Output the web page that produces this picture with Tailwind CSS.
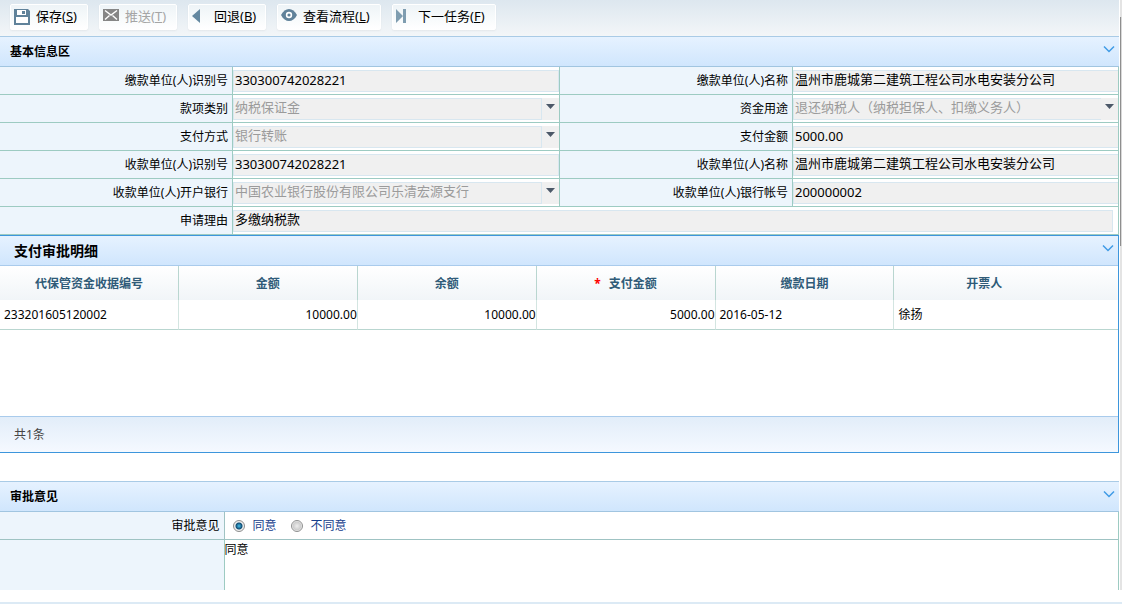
<!DOCTYPE html>
<html lang="zh-CN">
<head>
<meta charset="utf-8">
<meta name="viewport" content="width=device-width, initial-scale=1">
<title>支付审批</title>
<script src="https://cdn.jsdelivr.net/npm/@tailwindcss/browser@4"></script>
</head>
<body class="min-h-screen bg-white font-['Noto_Sans','Noto_Sans_CJK_SC',sans-serif] text-xs text-black">
<div class="flex">
<div class="min-w-0 flex-1">

<header class="flex h-9 items-start gap-[11px] bg-linear-to-b from-[#dde7ef] to-[#f3f6f8] px-2.5 pt-1">
  <button class="flex h-[26px] w-[78px] items-center gap-1.5 rounded-xs border border-white bg-linear-to-b from-[#eef4f7] to-white pl-[3px] text-[13px] whitespace-nowrap shadow-xs">
    <svg class="size-4 shrink-0" viewBox="0 0 16 16"><path fill="#60829a" d="M0 0h14l2 2v14H0z"/><path fill="#fff" d="M2 8h12v6H2zM3 1h9v5H3z"/><path fill="#60829a" d="M8 2h3v3H8z"/></svg>
    <span>保存(<u>S</u>)</span>
  </button>
  <button disabled class="flex h-[26px] w-[78px] items-center gap-1.5 rounded-xs border border-white bg-linear-to-b from-[#eef4f7] to-white pl-[3px] text-[13px] whitespace-nowrap text-[#a5a5a5] shadow-xs">
    <svg class="mb-1 h-3 w-4 shrink-0" viewBox="0 0 16 12"><path fill="#868686" d="M0 0h16v12H0z"/><path fill="none" stroke="#fff" stroke-width="1.4" d="M2 1.5l6 4.500 6-4.500M2 10.500l4.500-4M14 10.500l-4.500-4"/></svg>
    <span>推送(<u>T</u>)</span>
  </button>
  <button class="flex h-[26px] w-[78px] items-center gap-3.5 rounded-xs border border-white bg-linear-to-b from-[#eef4f7] to-white pl-[3px] text-[13px] whitespace-nowrap shadow-xs">
    <svg class="mb-0.5 h-3.5 w-2 shrink-0" viewBox="0 0 8 14"><path fill="#6488a0" d="M8 0v14L0 7z"/></svg>
    <span>回退(<u>B</u>)</span>
  </button>
  <button class="flex h-[26px] w-[104px] items-center gap-1.5 rounded-xs border border-white bg-linear-to-b from-[#eef4f7] to-white pl-[3px] text-[13px] whitespace-nowrap shadow-xs">
    <svg class="mb-1 h-3 w-4 shrink-0" viewBox="0 0 16 12"><path fill="#60829a" d="M0 6C4-2 12-2 16 6 12 14 4 14 0 6z"/><circle cx="8" cy="6" r="3.200" fill="#fff"/><circle cx="8" cy="6" r="1.600" fill="#60829a"/></svg>
    <span>查看流程(<u>L</u>)</span>
  </button>
  <button class="flex h-[26px] w-[104px] items-center gap-3 rounded-xs border border-white bg-linear-to-b from-[#eef4f7] to-white pl-[3px] text-[13px] whitespace-nowrap shadow-xs">
    <svg class="mb-0.5 h-3.5 w-2.5 shrink-0" viewBox="0 0 10 14"><path fill="#7f9db0" d="M0 0l7 7-7 7zM7 0h3v14H7z"/></svg>
    <span>下一任务(<u>F</u>)</span>
  </button>
</header>

<section>
  <div class="flex h-[31px] items-center justify-between border-y border-t-[#a9cbe6] border-b-[#a1c5e0] bg-linear-to-b from-[#e6f2ff] to-[#d0e6fd] pr-1 pl-2.5">
    <h2 class="text-xs font-bold">基本信息区</h2>
    <button aria-label="收起" class="mb-1.5"><svg class="h-2 w-3" viewBox="0 0 12 8"><path fill="none" stroke="#3f9be6" stroke-width="1.500" d="M1 1.500l5 5 5-5"/></svg></button>
  </div>
  <div class="grid grid-cols-[232fr_327fr_233fr_326fr] border-r border-[#9dcbc2]">
    <label for="f1" class="flex h-7 items-center justify-end border-b border-[#9dcbc2] bg-[#edf5fc] pr-1">缴款单位(人)识别号</label>
    <div class="flex h-7 min-w-0 items-start border-b border-l border-[#9dcbc2] pt-[3px]"><input id="f1" readonly class="h-[22px] w-full min-w-0 border border-[#d8e7f0] bg-[#f0f0f0] px-px pb-0.5 text-[13px]" value="330300742028221"></div>
    <label for="f2" class="flex h-7 items-center justify-end border-b border-l border-[#9dcbc2] bg-[#edf5fc] pr-1">缴款单位(人)名称</label>
    <div class="flex h-7 min-w-0 items-start border-b border-l border-[#9dcbc2] pt-[3px]"><input id="f2" readonly class="h-[22px] w-full min-w-0 border border-r-0 border-[#d8e7f0] bg-[#f0f0f0] px-px pb-1.5 text-[13px]" value="温州市鹿城第二建筑工程公司水电安装分公司"></div>

    <label for="f3" class="flex h-7 items-center justify-end border-b border-[#9dcbc2] bg-[#edf5fc] pr-1">款项类别</label>
    <div class="flex h-7 min-w-0 items-start border-b border-l border-[#9dcbc2] pt-[3px]"><select id="f3" disabled class="h-[22px] min-w-0 flex-1 appearance-none border border-[#d8e7f0] bg-[#f0f0f0] px-px pb-0.5 text-[13px] text-[#9b9b9b]"><option>纳税保证金</option></select><span class="flex h-[22px] w-[17px] justify-center bg-[#f0f0f0] pt-1.5"><svg class="h-[5px] w-[9px]" viewBox="0 0 9 5"><path fill="#4c5868" d="M0 0h9L4.500 5z"/></svg></span></div>
    <label for="f4" class="flex h-7 items-center justify-end border-b border-l border-[#9dcbc2] bg-[#edf5fc] pr-1">资金用途</label>
    <div class="flex h-7 min-w-0 items-start border-b border-l border-[#9dcbc2] pt-[3px]"><select id="f4" disabled class="h-[22px] min-w-0 flex-1 appearance-none border border-r-0 border-[#d8e7f0] bg-[#f0f0f0] px-px pb-0.5 text-[13px] text-[#9b9b9b]"><option>退还纳税人（纳税担保人、扣缴义务人）</option></select><span class="flex h-[22px] w-[17px] justify-center bg-[#f0f0f0] pt-1.5"><svg class="h-[5px] w-[9px]" viewBox="0 0 9 5"><path fill="#4c5868" d="M0 0h9L4.500 5z"/></svg></span></div>

    <label for="f5" class="flex h-7 items-center justify-end border-b border-[#9dcbc2] bg-[#edf5fc] pr-1">支付方式</label>
    <div class="flex h-7 min-w-0 items-start border-b border-l border-[#9dcbc2] pt-[3px]"><select id="f5" disabled class="h-[22px] min-w-0 flex-1 appearance-none border border-[#d8e7f0] bg-[#f0f0f0] px-px pb-0.5 text-[13px] text-[#9b9b9b]"><option>银行转账</option></select><span class="flex h-[22px] w-[17px] justify-center bg-[#f0f0f0] pt-1.5"><svg class="h-[5px] w-[9px]" viewBox="0 0 9 5"><path fill="#4c5868" d="M0 0h9L4.500 5z"/></svg></span></div>
    <label for="f6" class="flex h-7 items-center justify-end border-b border-l border-[#9dcbc2] bg-[#edf5fc] pr-1">支付金额</label>
    <div class="flex h-7 min-w-0 items-start border-b border-l border-[#9dcbc2] pt-[3px]"><input id="f6" readonly class="h-[22px] w-full min-w-0 border border-r-0 border-[#d8e7f0] bg-[#f0f0f0] px-px pb-0.5 text-[13px]" value="5000.00"></div>

    <label for="f7" class="flex h-7 items-center justify-end border-b border-[#9dcbc2] bg-[#edf5fc] pr-1">收款单位(人)识别号</label>
    <div class="flex h-7 min-w-0 items-start border-b border-l border-[#9dcbc2] pt-[3px]"><input id="f7" readonly class="h-[22px] w-full min-w-0 border border-[#d8e7f0] bg-[#f0f0f0] px-px pb-0.5 text-[13px]" value="330300742028221"></div>
    <label for="f8" class="flex h-7 items-center justify-end border-b border-l border-[#9dcbc2] bg-[#edf5fc] pr-1">收款单位(人)名称</label>
    <div class="flex h-7 min-w-0 items-start border-b border-l border-[#9dcbc2] pt-[3px]"><input id="f8" readonly class="h-[22px] w-full min-w-0 border border-r-0 border-[#d8e7f0] bg-[#f0f0f0] px-px pb-1.5 text-[13px]" value="温州市鹿城第二建筑工程公司水电安装分公司"></div>

    <label for="f9" class="flex h-7 items-center justify-end border-b border-[#9dcbc2] bg-[#edf5fc] pr-1">收款单位(人)开户银行</label>
    <div class="flex h-7 min-w-0 items-start border-b border-l border-[#9dcbc2] pt-[3px]"><select id="f9" disabled class="h-[22px] min-w-0 flex-1 appearance-none border border-[#d8e7f0] bg-[#f0f0f0] px-px pb-0.5 text-[13px] text-[#9b9b9b]"><option>中国农业银行股份有限公司乐清宏源支行</option></select><span class="flex h-[22px] w-[17px] justify-center bg-[#f0f0f0] pt-1.5"><svg class="h-[5px] w-[9px]" viewBox="0 0 9 5"><path fill="#4c5868" d="M0 0h9L4.500 5z"/></svg></span></div>
    <label for="f10" class="flex h-7 items-center justify-end border-b border-l border-[#9dcbc2] bg-[#edf5fc] pr-1">收款单位(人)银行帐号</label>
    <div class="flex h-7 min-w-0 items-start border-b border-l border-[#9dcbc2] pt-[3px]"><input id="f10" readonly class="h-[22px] w-full min-w-0 border border-r-0 border-[#d8e7f0] bg-[#f0f0f0] px-px pb-0.5 text-[13px]" value="200000002"></div>

    <label for="f11" class="flex h-7 items-center justify-end border-b border-[#9dcbc2] bg-[#edf5fc] pr-1">申请理由</label>
    <div class="col-span-3 flex h-7 min-w-0 items-start border-b border-l border-[#9dcbc2] pt-[3px] pr-[5px]"><input id="f11" readonly class="h-[22px] w-full min-w-0 border border-[#d8e7f0] bg-[#f0f0f0] px-px pb-1.5 text-[13px]" value="多缴纳税款"></div>
  </div>
</section>

<section class="border-y border-r border-[#3d96dc]">
  <div class="flex h-[30px] items-center justify-between border-b border-[#a9cbec] bg-linear-to-b from-[#e6f2ff] to-[#d0e6fd] pr-1 pl-3.5">
    <h2 class="text-sm font-bold">支付审批明细</h2>
    <button aria-label="收起" class="mb-1.5"><svg class="h-2 w-3" viewBox="0 0 12 8"><path fill="none" stroke="#3f9be6" stroke-width="1.500" d="M1 1.500l5 5 5-5"/></svg></button>
  </div>
  <div class="min-h-[150px]">
    <table class="w-full table-fixed border-separate border-spacing-0">
      <thead>
        <tr class="h-[34px] bg-linear-to-b from-white to-[#f1f5f8] text-[#2f5b78]">
          <th class="w-[16%] border-r border-[#b9d6d0] p-0 pt-0.5">代保管资金收据编号</th>
          <th class="w-[16%] border-r border-[#b9d6d0] p-0 pt-0.5">金额</th>
          <th class="w-[16%] border-r border-[#b9d6d0] p-0 pt-0.5">余额</th>
          <th class="w-[16%] border-r border-[#b9d6d0] p-0 pt-0.5"><span class="mr-2 text-[#f00]">*</span>支付金额</th>
          <th class="w-[16%] border-r border-[#b9d6d0] p-0 pt-0.5">缴款日期</th>
          <th class="p-0 pt-0.5 pr-11">开票人</th>
        </tr>
      </thead>
      <tbody>
        <tr class="h-[30px]">
          <td class="border-r border-b border-r-[#d3e5e1] border-b-[#b9d6d0] p-0 pl-1">233201605120002</td>
          <td class="border-r border-b border-r-[#d3e5e1] border-b-[#b9d6d0] p-0 text-right">10000.00</td>
          <td class="border-r border-b border-r-[#d3e5e1] border-b-[#b9d6d0] p-0 text-right">10000.00</td>
          <td class="border-r border-b border-r-[#d3e5e1] border-b-[#b9d6d0] p-0 text-right">5000.00</td>
          <td class="border-r border-b border-r-[#d3e5e1] border-b-[#b9d6d0] p-0 pl-1">2016-05-12</td>
          <td class="border-b border-[#b9d6d0] p-0 pl-1">徐扬</td>
        </tr>
      </tbody>
    </table>
  </div>
  <div class="flex h-9 items-center border-t border-[#a9cbec] bg-linear-to-b from-[#e2edf9] to-[#f5f9ff] pl-3.5 text-[#444]">共1条</div>
</section>

<section class="mt-7">
  <div class="flex h-[31px] items-center justify-between border-y border-t-[#a9cbe6] border-b-[#a1c5e0] bg-linear-to-b from-[#e6f2ff] to-[#d0e6fd] pr-1 pl-2.5">
    <h2 class="text-xs font-bold">审批意见</h2>
    <button aria-label="收起" class="mb-1.5"><svg class="h-2 w-3" viewBox="0 0 12 8"><path fill="none" stroke="#3f9be6" stroke-width="1.500" d="M1 1.500l5 5 5-5"/></svg></button>
  </div>
  <div class="grid grid-cols-[1fr_4fr] border-r border-[#9dcbc2]">
    <div id="opinion" class="flex h-7 items-center justify-end border-b border-[#9fc3c3] bg-[#edf5fc] pr-1">审批意见</div>
    <div role="radiogroup" aria-labelledby="opinion" class="flex h-7 items-center gap-3.5 border-b border-l border-[#9fc3c3] pl-2 text-[#153e8c]">
      <label class="flex items-center gap-2"><input type="radio" name="op" checked class="size-3 appearance-none rounded-full border border-[#8e8f8f] bg-[#eee] checked:bg-[radial-gradient(circle,#4ac0ea_0,#0f4d75_3px,#eee_4px)]">同意</label>
      <label class="flex items-center gap-2"><input type="radio" name="op" class="size-3 appearance-none rounded-full border border-[#8e8f8f] bg-[radial-gradient(circle,#eee_0,#ccc_4px,#f4f4f4_5px)]">不同意</label>
    </div>
    <div class="bg-[#edf5fc]"></div>
    <div class="flex border-l border-[#9dcbc2]"><textarea aria-label="审批意见内容" class="h-[50px] w-full resize-none leading-5">同意</textarea></div>
  </div>
</section>
</div>
<div class="ml-px w-0.5 bg-[#e4e4e4]"><div class="mt-[17px] h-[229px] border-l border-[#8e8e8e] bg-[#d8d8d8]"></div></div>
</div>
<div class="mt-3 h-0.5 bg-[#dceaf5]"></div>
</body>
</html>
